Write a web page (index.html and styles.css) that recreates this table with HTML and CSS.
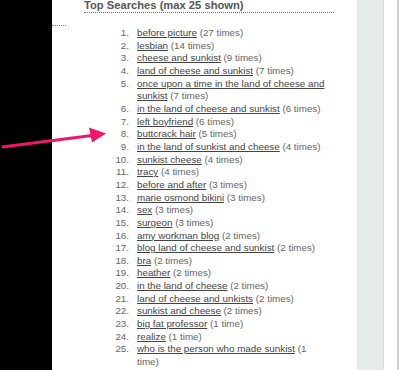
FILE: index.html
```html
<!DOCTYPE html>
<html>
<head>
<meta charset="utf-8">
<link rel="stylesheet" href="styles.css">
</head>
<body>
<div class="page">
  <div class="blackcol"></div>
  <div class="main">
    <div class="side"><div class="side-rule"></div></div>
    <div class="content">
      <h2 class="title">Top Searches (max 25 shown)</h2>
      <ol class="list">
        <li><span class="num">1.</span><span class="txt"><a href="#">before picture</a> (27 times)</span></li>
        <li><span class="num">2.</span><span class="txt"><a href="#">lesbian</a> (14 times)</span></li>
        <li><span class="num">3.</span><span class="txt"><a href="#">cheese and sunkist</a> (9 times)</span></li>
        <li><span class="num">4.</span><span class="txt"><a href="#">land of cheese and sunkist</a> (7 times)</span></li>
        <li><span class="num">5.</span><span class="txt"><a href="#">once upon a time in the land of cheese and sunkist</a> (7 times)</span></li>
        <li><span class="num">6.</span><span class="txt"><a href="#">in the land of cheese and sunkist</a> (6 times)</span></li>
        <li><span class="num">7.</span><span class="txt"><a href="#">left boyfriend</a> (6 times)</span></li>
        <li><span class="num">8.</span><span class="txt"><a href="#">buttcrack hair</a> (5 times)</span></li>
        <li><span class="num">9.</span><span class="txt"><a href="#">in the land of sunkist and cheese</a> (4 times)</span></li>
        <li><span class="num">10.</span><span class="txt"><a href="#">sunkist cheese</a> (4 times)</span></li>
        <li><span class="num">11.</span><span class="txt"><a href="#">tracy</a> (4 times)</span></li>
        <li><span class="num">12.</span><span class="txt"><a href="#">before and after</a> (3 times)</span></li>
        <li><span class="num">13.</span><span class="txt"><a href="#">marie osmond bikini</a> (3 times)</span></li>
        <li><span class="num">14.</span><span class="txt"><a href="#">sex</a> (3 times)</span></li>
        <li><span class="num">15.</span><span class="txt"><a href="#">surgeon</a> (3 times)</span></li>
        <li><span class="num">16.</span><span class="txt"><a href="#">amy workman blog</a> (2 times)</span></li>
        <li><span class="num">17.</span><span class="txt"><a href="#">blog land of cheese and sunkist</a> (2 times)</span></li>
        <li><span class="num">18.</span><span class="txt"><a href="#">bra</a> (2 times)</span></li>
        <li><span class="num">19.</span><span class="txt"><a href="#">heather</a> (2 times)</span></li>
        <li><span class="num">20.</span><span class="txt"><a href="#">in the land of cheese</a> (2 times)</span></li>
        <li><span class="num">21.</span><span class="txt"><a href="#">land of cheese and unkists</a> (2 times)</span></li>
        <li><span class="num">22.</span><span class="txt"><a href="#">sunkist and cheese</a> (2 times)</span></li>
        <li><span class="num">23.</span><span class="txt"><a href="#">big fat professor</a> (1 time)</span></li>
        <li><span class="num">24.</span><span class="txt"><a href="#">realize</a> (1 time)</span></li>
        <li><span class="num">25.</span><span class="txt"><a href="#">who is the person who made sunkist</a> (1 time)</span></li>
      </ol>
    </div>
  </div>
  <div class="panel"></div>
  <div class="gap"></div>
  <div class="edge"></div>
  <div class="tail"></div>
</div>
<svg class="arrow" width="120" height="30" viewBox="0 125 120 30">
  <line x1="2" y1="147" x2="92" y2="135.5" stroke="#f0166a" stroke-width="3"/>
  <polygon points="106,133.5 89,127.5 92,142.5" fill="#f0166a"/>
</svg>
</body>
</html>
```

FILE: styles.css
```css
html, body {
  margin: 0;
  padding: 0;
  background: #fff;
}
body {
  width: 400px;
  height: 370px;
  overflow: hidden;
  position: relative;
  font-family: "Liberation Sans", Arial, sans-serif;
}
.page {
  display: flex;
  height: 370px;
}
.blackcol {
  width: 52px;
  flex: none;
  background: #000;
}
.main {
  width: 305px;
  flex: none;
  display: flex;
  background: #fff;
}
.side {
  width: 32px;
  flex: none;
  padding-top: 25px;
}
.side-rule {
  width: 14px;
  border-top: 1px dotted #888;
}
.content {
  width: 250px;
  flex: none;
}
.title {
  margin: 0;
  font-size: 11.2px;
  font-weight: bold;
  line-height: 10px;
  height: 10px;
  padding-bottom: 2px;
  color: #555;
  border-bottom: 1px dotted #777;
}
.list {
  list-style: none;
  margin: 14px 0 0 0;
  padding: 0;
  font-size: 9.8px;
  line-height: 12.65px;
  color: #666;
}
.list li {
  display: flex;
  gap: 8px;
}
.num {
  width: 45px;
  flex: none;
  text-align: right;
}
.txt {
  width: 190px;
  flex: none;
}
.txt a {
  color: #444;
  text-decoration: underline;
}
.panel {
  width: 26px;
  flex: none;
  background: #e5ecea;
  border-right: 1px solid #d8dfdd;
}
.gap {
  width: 13px;
  flex: none;
}
.edge {
  width: 2px;
  flex: none;
  background: #cfcfcf;
}
.tail {
  flex: 1;
}
.arrow {
  position: absolute;
  left: 0;
  top: 125px;
}
```
